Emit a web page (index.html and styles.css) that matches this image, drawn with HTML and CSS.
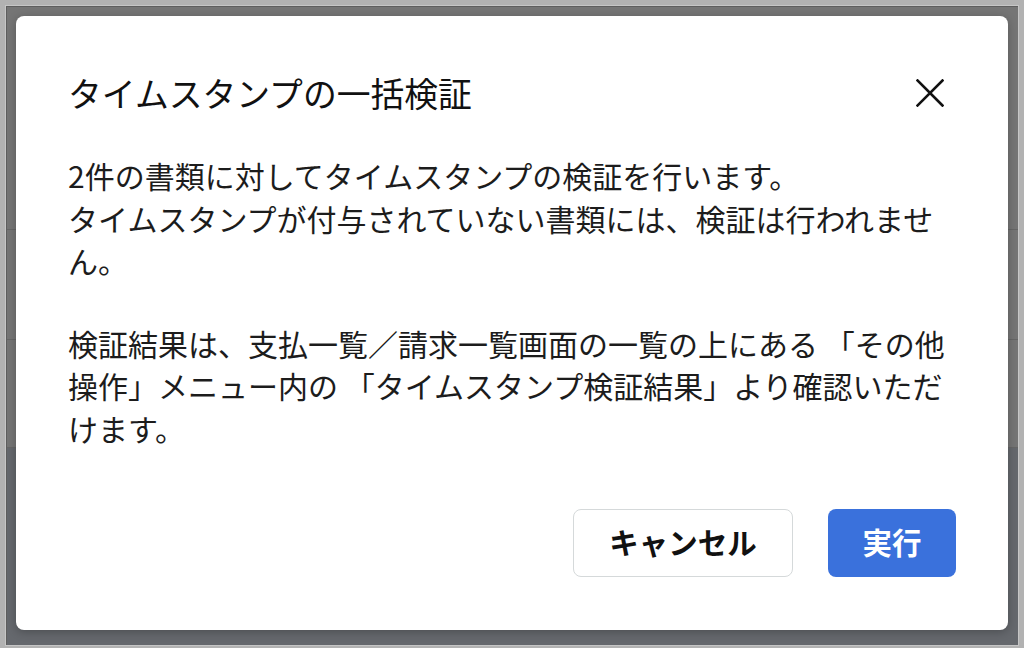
FILE: index.html
```html
<!DOCTYPE html>
<html lang="ja">
<head>
<meta charset="utf-8">
<link rel="stylesheet" href="styles.css">
</head>
<body>
<div class="frame">
  <div class="backdrop">
    <div class="bg-row r1"></div>
    <div class="bg-row r2"></div>
    <div class="bg-row r3"></div>
    <div class="bg-row r4"></div>
  </div>
  <div class="modal" role="dialog">
    <div class="modal-header">
      <h1 class="modal-title">タイムスタンプの一括検証</h1>
      <button class="close-btn" aria-label="閉じる">
        <svg width="28" height="28" viewBox="0 0 28 28"><path d="M1.5 1.5 L26.5 26.5 M26.5 1.5 L1.5 26.5" stroke="#111" stroke-width="2.6" stroke-linecap="square" fill="none"/></svg>
      </button>
    </div>
    <div class="modal-body">
      <p>2件の書類に対してタイムスタンプの検証を行います。<br>タイムスタンプが付与されていない書類には、検証は行われません。</p>
      <p>検証結果は、支払一覧／請求一覧画面の一覧の上にある 「その他操作」メニュー内の 「タイムスタンプ検証結果」より確認いただけます。</p>
    </div>
    <div class="modal-footer">
      <button class="btn btn-secondary">キャンセル</button>
      <button class="btn btn-primary">実行</button>
    </div>
  </div>
</div>
</body>
</html>
```

FILE: styles.css
```css
html, body {
  margin: 0;
  padding: 0;
  width: 1024px;
  height: 648px;
  overflow: hidden;
}
body {
  background: #b2b2b2;
  font-family: "Noto Sans CJK JP", "Noto Sans", sans-serif;
  color: #1a1a1a;
}
.frame {
  position: relative;
  width: 1024px;
  height: 648px;
  box-sizing: border-box;
  padding: 6px 6px 4px 6px;
}
.backdrop {
  height: 100%;
  display: flex;
  flex-direction: column;
  border-left: 1px solid #5e5e5e;
  border-top: 1px solid #5e5e5e;
  box-shadow: 0 0 0 1px #c6c6c6;
}
.bg-row {
  border-bottom: 1px solid #666;
  background: #757575;
}
.r1 { height: 222px; }
.r2 { height: 109px; }
.r3 { height: 107px; }
.r4 { flex: 1; border-bottom: 0; background: #65686d; }

.modal {
  position: absolute;
  left: 16px;
  top: 16px;
  width: 992px;
  height: 614px;
  box-sizing: border-box;
  background: #fff;
  border-radius: 8px;
  box-shadow: 0 2px 10px rgba(0,0,0,0.25);
  padding: 50px 52px 53px 52px;
  display: flex;
  flex-direction: column;
}
.modal-header {
  display: flex;
  align-items: center;
  justify-content: space-between;
  height: 54px;
}
.modal-title {
  margin: 0;
  font-size: 33.8px;
  font-weight: 400;
  line-height: 54px;
  color: #111;
}
.close-btn {
  border: 0;
  background: none;
  padding: 0;
  margin: 0 12px 0 0;
  width: 28px;
  height: 28px;
  display: flex;
}
.modal-body {
  margin-top: 34px;
  font-size: 30px;
  line-height: 42.5px;
  color: #1c1c1c;
}
.modal-body p {
  margin: 0 0 40px 0;
}
.modal-body p:last-child {
  margin-bottom: 0;
}
.modal-footer {
  margin-top: auto;
  display: flex;
  justify-content: flex-end;
  gap: 35px;
}
.btn {
  height: 68px;
  border-radius: 8px;
  font-family: "Noto Sans CJK JP", "Noto Sans", sans-serif;
  font-size: 29.5px;
  font-weight: 700;
  padding: 0 34px 4px;
  box-sizing: border-box;
  cursor: pointer;
}
.btn-secondary {
  width: 220px;
  background: #fff;
  color: #111;
  border: 1.5px solid #d5d9da;
}
.btn-primary {
  width: 128px;
  background: #3a71dc;
  color: #fff;
  border: 0;
}
```
